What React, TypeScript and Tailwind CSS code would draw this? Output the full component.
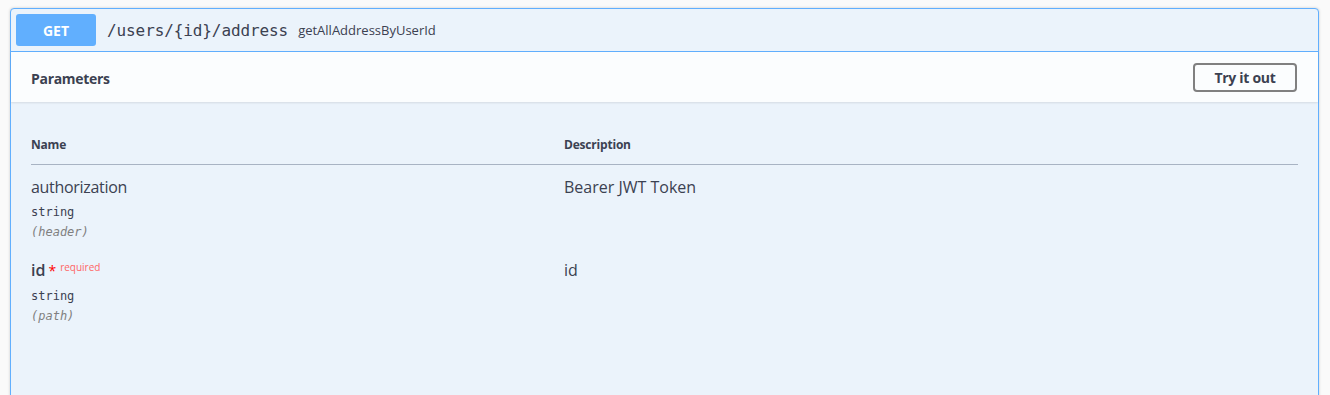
import React from 'react';

const params = [
  { name: 'authorization', required: false, type: 'string', in: '(header)', description: 'Bearer JWT Token' },
  { name: 'id', required: true, type: 'string', in: '(path)', description: 'id' },
];

const App: React.FC = () => {
  return (
    <div className="min-h-[395px] bg-[#fafafa] pl-[10px] pr-[11px] pt-[8px]">
      <div className="rounded-[4px] border border-[#61affe] bg-[#ebf3fb] shadow-[0_0_3px_rgba(0,0,0,0.19)] min-h-[400px]">
        {/* summary */}
        <div className="flex h-[43px] items-center border-b border-[#61affe] px-[5px]">
          <span className="flex h-[32px] w-[80px] items-center justify-center rounded-[3px] bg-[#61affe] text-[14px] font-bold text-white [font-family:'Open_Sans',sans-serif]">
            GET
          </span>
          <span className="ml-[11px] mt-[2px] text-[16px] text-[#3b4151] [font-family:'DejaVu_Sans_Mono',monospace] tracking-[-0.1px]">
            /users/&#123;id&#125;/address
          </span>
          <span className="ml-[10px] mt-[2px] text-[13px] text-[#3b4151] [font-family:'Open_Sans',sans-serif]">
            getAllAddressByUserId
          </span>
        </div>

        {/* section header */}
        <div className="flex h-[50px] items-center justify-between bg-white/80 px-[20px] shadow-[0_1px_2px_rgba(0,0,0,0.1)]">
          <h4 className="pt-[2px] text-[14px] font-bold text-[#3b4151] [font-family:'Open_Sans',sans-serif] tracking-[-0.3px]">
            Parameters
          </h4>
          <button className="mr-[1px] mt-[1px] h-[29px] w-[104px] rounded-[4px] border-2 border-[#808080] bg-transparent text-[14px] font-bold text-[#3b4151] [font-family:'Open_Sans',sans-serif] tracking-[-0.3px]">
            Try it out
          </button>
        </div>

        {/* table */}
        <div className="px-[20px] pt-[23px]">
          <div className="flex h-[40px] items-center border-b border-[#a8b3c3] text-[12px] font-bold text-[#3b4151] [font-family:'Open_Sans',sans-serif] tracking-[-0.2px]">
            <div className="w-[533px]">Name</div>
            <div>Description</div>
          </div>
          {params.map((p) => (
            <div key={p.name} className="flex h-[83px] pt-[12px]">
              <div className="w-[533px]">
                {p.required ? (
                  <div className="flex items-start leading-[20px]">
                    <span className="text-[16px] font-semibold text-[#3b4151] [font-family:'Open_Sans',sans-serif]">{p.name}</span>
                    <span className="ml-[3px] text-[14px] text-[#ff0000] [font-family:'Open_Sans',sans-serif] leading-[22px]">*</span>
                    <span className="ml-[4px] -mt-[3px] text-[10px] text-[#ff6666] [font-family:'Open_Sans',sans-serif]">required</span>
                  </div>
                ) : (
                  <div className="text-[16px] leading-[20px] text-[#3b4151] [font-family:'Open_Sans',sans-serif] tracking-[-0.3px]">
                    {p.name}
                  </div>
                )}
                <div className={`${p.required ? 'mt-[7px]' : 'mt-[8px]'} text-[12px] leading-[14px] text-[#3b4151] [font-family:'DejaVu_Sans_Mono',monospace]`}>
                  {p.type}
                </div>
                <div className="mt-[6px] text-[12px] italic leading-[14px] text-[#808080] [font-family:'DejaVu_Sans_Mono',monospace]">
                  {p.in}
                </div>
              </div>
              <div className="text-[16px] leading-[20px] text-[#3b4151] [font-family:'Open_Sans',sans-serif]">
                {p.description}
              </div>
            </div>
          ))}
        </div>
      </div>
    </div>
  );
};

export default App;
